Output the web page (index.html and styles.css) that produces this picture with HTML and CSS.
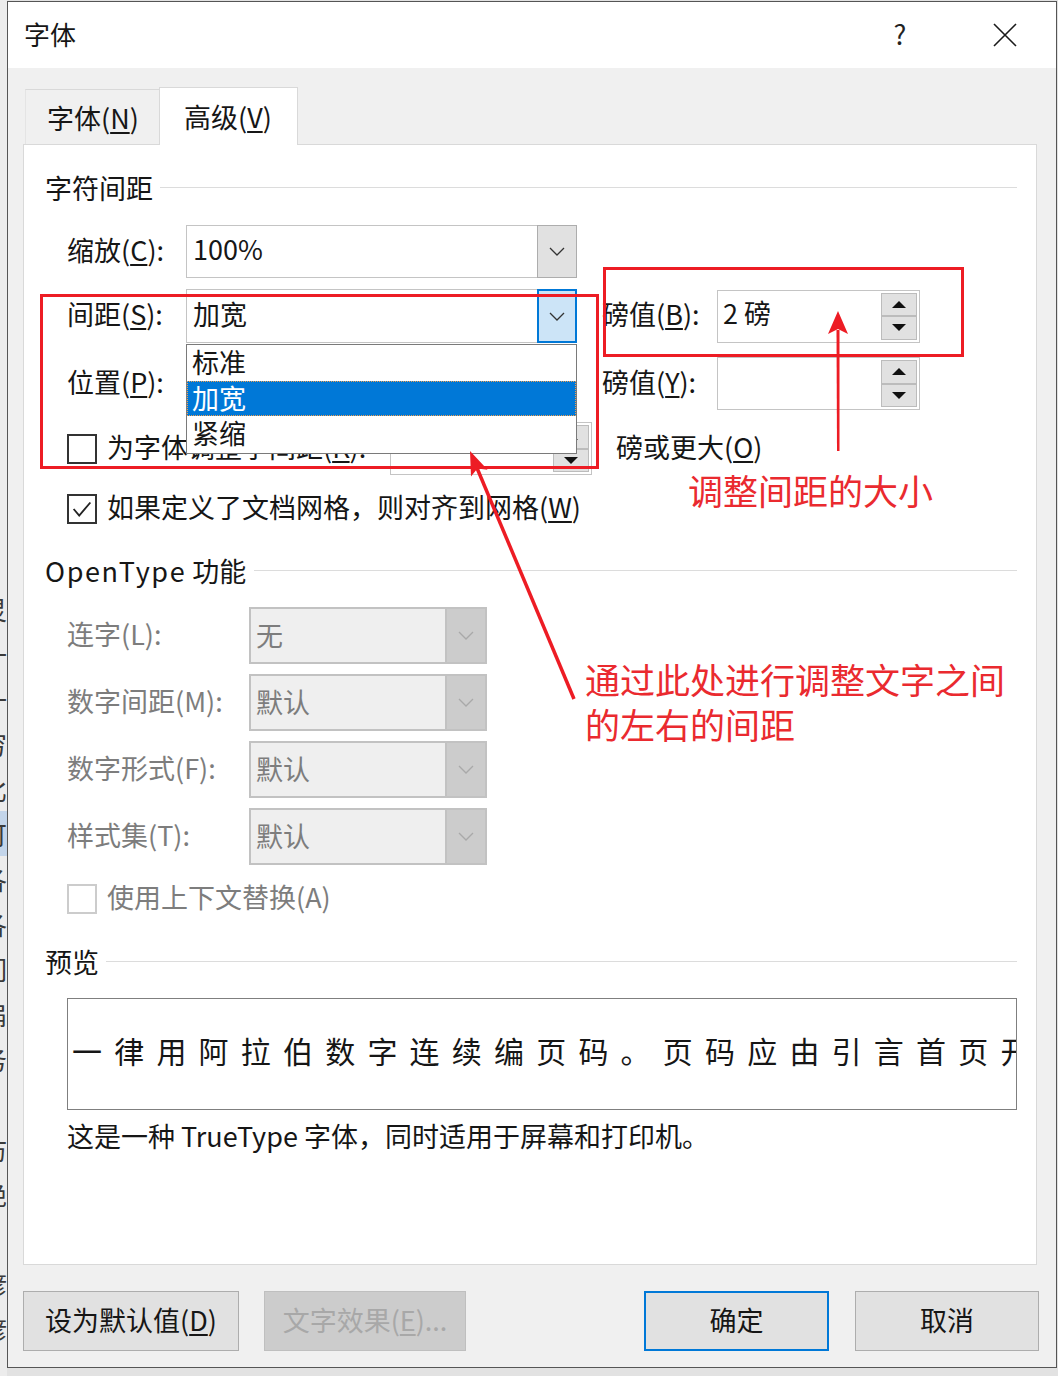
FILE: index.html
```html
<!DOCTYPE html>
<html lang="zh-CN">
<head>
    <meta charset="UTF-8" />
    <title>字体</title>
    <link rel="stylesheet" href="styles.css">
</head>
<body>
<div class="desktop">
    <!-- кусок окна документа за диалогом -->
    <div class="behind">
        <span class="frag">/</span>
        <span class="gap"></span>
        <span class="frag">灵</span>
        <span class="frag">一</span>
        <span class="frag">一</span>
        <span class="frag">穷</span>
        <span class="frag">比</span>
        <span class="frag sel">可</span>
        <span class="frag">各</span>
        <span class="frag">各</span>
        <span class="frag">们</span>
        <span class="frag">扁</span>
        <span class="frag">务</span>
        <span class="frag"></span>
        <span class="frag">访</span>
        <span class="frag">绝</span>
        <span class="frag"></span>
        <span class="frag">谚</span>
        <span class="frag">谚</span>
    </div>

    <div class="dialog">
        <div class="titlebar">
            <span class="title">字体</span>
            <span class="help">?</span>
            <span class="close">
                <svg width="24" height="24" viewBox="0 0 24 24"><path d="M1 1 L23 23 M23 1 L1 23" stroke="#1a1a1a" stroke-width="1.6" fill="none"/></svg>
            </span>
        </div>

        <div class="dialog-body">
            <div class="tabs">
                <div class="tab">字体(<u>N</u>)</div>
                <div class="tab active">高级(<u>V</u>)</div>
            </div>

            <div class="panel">
                <div class="group-title">字符间距</div>

                <div class="row row-scale">
                    <span class="lbl">缩放(<u>C</u>):</span>
                    <div class="combo">
                        <span class="value">100%</span>
                        <span class="drop"><svg width="16" height="9" viewBox="0 0 16 9"><polyline points="1,1 8,8 15,1" fill="none" stroke="#333" stroke-width="1.3"/></svg></span>
                    </div>
                </div>

                <div class="row row-spacing">
                    <span class="lbl">间距(<u>S</u>):</span>
                    <div class="combo">
                        <span class="value">加宽</span>
                        <span class="drop hot"><svg width="16" height="9" viewBox="0 0 16 9"><polyline points="1,1 8,8 15,1" fill="none" stroke="#333" stroke-width="1.3"/></svg></span>
                    </div>
                    <div class="side">
                        <span class="side-lbl">磅值(<u>B</u>):</span>
                        <div class="spin">
                            <span class="value">2 磅</span>
                            <span class="arrows">
                                <span><svg width="14" height="7" viewBox="0 0 14 7"><polygon points="7,0 14,7 0,7" fill="#111"/></svg></span>
                                <span><svg width="14" height="7" viewBox="0 0 14 7"><polygon points="0,0 14,0 7,7" fill="#111"/></svg></span>
                            </span>
                        </div>
                    </div>
                </div>

                <div class="row row-position">
                    <span class="lbl">位置(<u>P</u>):</span>
                    <div class="combo">
                        <span class="value"></span>
                        <span class="drop"><svg width="16" height="9" viewBox="0 0 16 9"><polyline points="1,1 8,8 15,1" fill="none" stroke="#333" stroke-width="1.3"/></svg></span>
                    </div>
                    <div class="side">
                        <span class="side-lbl">磅值(<u>Y</u>):</span>
                        <div class="spin">
                            <span class="value"></span>
                            <span class="arrows">
                                <span><svg width="14" height="7" viewBox="0 0 14 7"><polygon points="7,0 14,7 0,7" fill="#111"/></svg></span>
                                <span><svg width="14" height="7" viewBox="0 0 14 7"><polygon points="0,0 14,0 7,7" fill="#111"/></svg></span>
                            </span>
                        </div>
                    </div>
                </div>

                <div class="row row-kern">
                    <div class="check-item kern-item">
                        <span class="check"></span>
                        <span class="check-text">为字体调整字间距(<u>K</u>):</span>
                    </div>
                    <div class="spin kern-spin">
                        <span class="value"></span>
                        <span class="arrows">
                            <span><svg width="14" height="7" viewBox="0 0 14 7"><polygon points="7,0 14,7 0,7" fill="#111"/></svg></span>
                            <span><svg width="14" height="7" viewBox="0 0 14 7"><polygon points="0,0 14,0 7,7" fill="#111"/></svg></span>
                        </span>
                    </div>
                    <span class="kern-after">磅或更大(<u>O</u>)</span>
                </div>

                <div class="row row-check">
                    <div class="check-item">
                        <span class="check"><svg width="28" height="28" viewBox="0 0 28 28"><polyline points="5,14 11,21 23,7" fill="none" stroke="#222" stroke-width="2"/></svg></span>
                        <span class="check-text">如果定义了文档网格，则对齐到网格(<u>W</u>)</span>
                    </div>
                </div>

                <div class="group-title group-opentype"><span class="latin">OpenType</span>&nbsp;功能</div>

                <div class="row row-off first">
                    <span class="lbl-wide">连字(L):</span>
                    <div class="combo off">
                        <span class="value">无</span>
                        <span class="drop"><svg width="16" height="9" viewBox="0 0 16 9"><polyline points="1,1 8,8 15,1" fill="none" stroke="#a9a9a9" stroke-width="1.3"/></svg></span>
                    </div>
                </div>
                <div class="row row-off">
                    <span class="lbl-wide">数字间距(M):</span>
                    <div class="combo off">
                        <span class="value">默认</span>
                        <span class="drop"><svg width="16" height="9" viewBox="0 0 16 9"><polyline points="1,1 8,8 15,1" fill="none" stroke="#a9a9a9" stroke-width="1.3"/></svg></span>
                    </div>
                </div>
                <div class="row row-off">
                    <span class="lbl-wide">数字形式(F):</span>
                    <div class="combo off">
                        <span class="value">默认</span>
                        <span class="drop"><svg width="16" height="9" viewBox="0 0 16 9"><polyline points="1,1 8,8 15,1" fill="none" stroke="#a9a9a9" stroke-width="1.3"/></svg></span>
                    </div>
                </div>
                <div class="row row-off">
                    <span class="lbl-wide">样式集(T):</span>
                    <div class="combo off">
                        <span class="value">默认</span>
                        <span class="drop"><svg width="16" height="9" viewBox="0 0 16 9"><polyline points="1,1 8,8 15,1" fill="none" stroke="#a9a9a9" stroke-width="1.3"/></svg></span>
                    </div>
                </div>

                <div class="row row-check row-check-off">
                    <div class="check-item off">
                        <span class="check"></span>
                        <span class="check-text">使用上下文替换(A)</span>
                    </div>
                </div>

                <div class="group-title group-preview">预览</div>

                <div class="preview">一律用阿拉伯数字连续编页码。页码应由引言首页开始</div>
                <div class="preview-note">这是一种 TrueType 字体，同时适用于屏幕和打印机。</div>
            </div>

            <div class="buttons">
                <button class="btn btn-default">设为默认值(<u>D</u>)</button>
                <button class="btn btn-effects" disabled>文字效果(<u>E</u>)...</button>
                <button class="btn btn-ok">确定</button>
                <button class="btn btn-cancel">取消</button>
            </div>
        </div>
    </div>

    <!-- раскрытый список "间距" -->
    <div class="dropdown-list">
        <div class="item">标准</div>
        <div class="item selected">加宽</div>
        <div class="item">紧缩</div>
    </div>

    <!-- пометки поверх окна -->
    <svg class="marks" width="1058" height="1376" viewBox="0 0 1058 1376">
        <rect x="41.5" y="295.5" width="556" height="172" fill="none" stroke="#ed1c24" stroke-width="3"/>
        <rect x="604.5" y="268.5" width="358" height="87" fill="none" stroke="#ed1c24" stroke-width="3"/>

        <polygon points="837,451 839.5,451 839.5,330 836.5,330" fill="#ed1c24"/>
        <polygon points="838,311 828,334 838,329 848,334" fill="#ed1c24"/>

        <line x1="574" y1="699" x2="477" y2="468" stroke="#ed1c24" stroke-width="3.5"/>
        <polygon points="470,451 487.6,469.7 477.4,468.5 471,476.6" fill="#ed1c24"/>
    </svg>

    <div class="note note-size">调整间距的大小</div>
    <div class="note note-spacing">通过此处进行调整文字之间<br>的左右的间距</div>
</div>
</body>
</html>
```

FILE: styles.css
```css
* {
    box-sizing: border-box;
}

body {
    margin: 0;
    width: 1058px;
    height: 1376px;
    overflow: hidden;
    background: #e2e2e2;
    font-family: "Noto Sans CJK SC", "Microsoft YaHei", sans-serif;
    font-size: 27px;
    color: #161616;
}

u {
    text-decoration-thickness: 1.5px;
    text-underline-offset: 3px;
}

.desktop {
    position: relative;
    display: flex;
    width: 1058px;
    height: 1376px;
}

/* полоска документа слева */
.behind {
    width: 7px;
    height: 1376px;
    overflow: hidden;
    background: #ececec;
    display: flex;
    flex-direction: column;
    padding-top: 16px;
}

.behind .frag {
    display: block;
    height: 45px;
    margin-left: -19px;
    font-size: 26px;
    line-height: 45px;
    color: #3a3a3a;
}

.behind .gap {
    height: 525px;
}

.behind .sel {
    background: #c3d5ea;
}

/* окно диалога */
.dialog {
    width: 1050px;
    height: 1367px;
    margin-top: 1px;
    border: 1px solid #555;
    background: #f0f0f0;
    display: flex;
    flex-direction: column;
}

.titlebar {
    height: 66px;
    background: #fff;
    display: flex;
    align-items: center;
    padding: 0 21px 0 16px;
    flex-shrink: 0;
}

.title {
    font-size: 26px;
    padding-bottom: 4px;
}

.help {
    margin-left: auto;
    width: 60px;
    text-align: center;
    font-size: 27px;
    color: #222;
    padding-bottom: 4px;
}

.close {
    width: 60px;
    margin-left: 45px;
    display: flex;
    justify-content: center;
}

.dialog-body {
    flex: 1;
    padding: 19px 19px 0 15px;
    display: flex;
    flex-direction: column;
}

.tabs {
    height: 57px;
    display: flex;
    align-items: flex-end;
}

.tab {
    width: 134px;
    height: 55px;
    margin-left: 2px;
    padding: 0 0 0 21px;
    border-top: 1px solid #d9d9d9;
    border-left: 1px solid #e4e4e4;
    display: flex;
    align-items: center;
    white-space: nowrap;
}

.tab.active {
    position: relative;
    z-index: 1;
    width: 139px;
    height: 58px;
    margin-left: 0;
    margin-bottom: -1px;
    padding: 0 0 0 24px;
    background: #fff;
    border: 1px solid #d9d9d9;
    border-bottom: none;
}

.panel {
    height: 1121px;
    background: #fff;
    border: 1px solid #d9d9d9;
    padding: 0 19px 0 21px;
    display: flex;
    flex-direction: column;
}

.group-title {
    height: 36px;
    margin-top: 26px;
    padding-bottom: 4px;
    display: flex;
    align-items: center;
    flex-shrink: 0;
}

.group-title::after {
    content: "";
    flex: 1;
    height: 1px;
    margin-left: 7px;
    background: #dcdcdc;
}

.group-opentype {
    margin-top: 27px;
}

.group-opentype .latin {
    letter-spacing: 1.6px;
}

.group-opentype::after {
    margin-left: 8px;
}

.group-preview {
    margin-top: 28px;
}

.row {
    display: flex;
    align-items: center;
    margin-left: 22px;
    flex-shrink: 0;
}

.row-scale {
    height: 53px;
    margin-top: 18px;
}

.row-spacing {
    height: 54px;
    margin-top: 11px;
}

.row-position {
    height: 53px;
    margin-top: 14px;
}

.row-kern {
    height: 53px;
    margin-top: 12px;
}

.row-check {
    height: 36px;
    margin-top: 16px;
}

.row-off {
    height: 57px;
    margin-top: 10px;
}

.row-off.first {
    margin-top: 17px;
}

.lbl,
.lbl-wide,
.side-lbl,
.kern-after,
.check-text {
    padding-bottom: 5px;
    white-space: nowrap;
}

.lbl {
    width: 119px;
}

.lbl-wide {
    width: 182px;
    color: #7d7d7d;
}

/* выпадающие списки */
.combo {
    width: 391px;
    height: 100%;
    display: flex;
    border: 1px solid #c4c4c4;
    background: #fff;
}

.combo .value {
    flex: 1;
    padding: 0 0 6px 6px;
    display: flex;
    align-items: center;
}

.combo .drop {
    width: 40px;
    margin: -1px -1px -1px 0;
    border: 1px solid #adadad;
    background: #e1e1e1;
    display: flex;
    align-items: center;
    justify-content: center;
}

.combo .drop.hot {
    background: #cce4f7;
    border: 2px solid #0078d7;
}

.combo.off {
    width: 238px;
    border: 2px solid #c2c2c2;
    background: #efefef;
    color: #7d7d7d;
}

.combo.off .value {
    padding: 0 0 2px 5px;
}

.combo.off .drop {
    margin: 0;
    border: none;
    border-left: 2px solid #c2c2c2;
    background: #cccccc;
}

/* счётчики */
.side {
    height: 100%;
    margin-left: 25px;
    display: flex;
    align-items: center;
}

.side-lbl {
    width: 115px;
}

.spin {
    width: 203px;
    height: 53px;
    display: flex;
    border: 1px solid #c4c4c4;
    background: #fff;
}

.spin .value {
    flex: 1;
    padding: 0 0 8px 5px;
    display: flex;
    align-items: center;
}

.spin .arrows {
    width: 38px;
    padding: 2px 2px 2px 0;
    display: flex;
    flex-direction: column;
}

.spin .arrows span {
    flex: 1;
    background: #e1e1e1;
    border: 1px solid #bcbcbc;
    display: flex;
    align-items: center;
    justify-content: center;
}

.kern-spin {
    width: 202px;
}

.kern-after {
    margin-left: 24px;
}

/* флажки */
.check-item {
    display: flex;
    align-items: center;
}

.kern-item {
    width: 323px;
}

.check {
    width: 30px;
    height: 30px;
    margin-right: 10px;
    border: 2px solid #333;
    background: #fff;
    display: flex;
    align-items: center;
    justify-content: center;
    flex-shrink: 0;
}

.check-item.off {
    color: #7d7d7d;
}

.check-item.off .check {
    border-color: #cccccc;
}

/* предпросмотр */
.preview {
    height: 112px;
    margin: 17px 0 0 22px;
    padding-left: 4px;
    border: 1px solid #7f7f7f;
    font-size: 30px;
    letter-spacing: 12.2px;
    line-height: 103px;
    white-space: nowrap;
    overflow: hidden;
    flex-shrink: 0;
}

.preview-note {
    height: 36px;
    margin: 10px 0 0 22px;
    line-height: 32px;
    white-space: nowrap;
}

/* кнопки внизу */
.buttons {
    height: 60px;
    margin: 26px -2px 0 0;
    display: flex;
}

.btn {
    height: 60px;
    font-family: inherit;
    font-size: 27px;
    color: #161616;
    background: #e1e1e1;
    border: 1px solid #adadad;
    padding: 0 0 4px 0;
    white-space: nowrap;
}

.btn-default {
    width: 216px;
}

.btn-effects {
    width: 202px;
    margin-left: 25px;
    background: #cccccc;
    border-color: #bfbfbf;
    color: #a8a8a8;
}

.btn-ok {
    width: 185px;
    margin-left: auto;
    border: 2px solid #0078d7;
}

.btn-cancel {
    width: 184px;
    margin-left: 26px;
}

/* раскрытый список */
.dropdown-list {
    position: absolute;
    left: 186px;
    top: 344px;
    width: 391px;
    height: 110px;
    border: 1px solid #7a7a7a;
    background: #fff;
}

.dropdown-list .item {
    height: 36px;
    padding-left: 5px;
    line-height: 34px;
}

.dropdown-list .item.selected {
    height: 35px;
    line-height: 33px;
    background: #0078d7;
    color: #fff;
    outline: 1px dotted #f0a050;
    outline-offset: -1px;
}

/* пометки */
.marks {
    position: absolute;
    left: 0;
    top: 0;
    pointer-events: none;
}

.note {
    position: absolute;
    font-size: 35px;
    color: #ea2a2f;
    white-space: nowrap;
}

.note-size {
    left: 688px;
    top: 470px;
    line-height: 40px;
}

.note-spacing {
    left: 585px;
    top: 656px;
    line-height: 45px;
}
```
